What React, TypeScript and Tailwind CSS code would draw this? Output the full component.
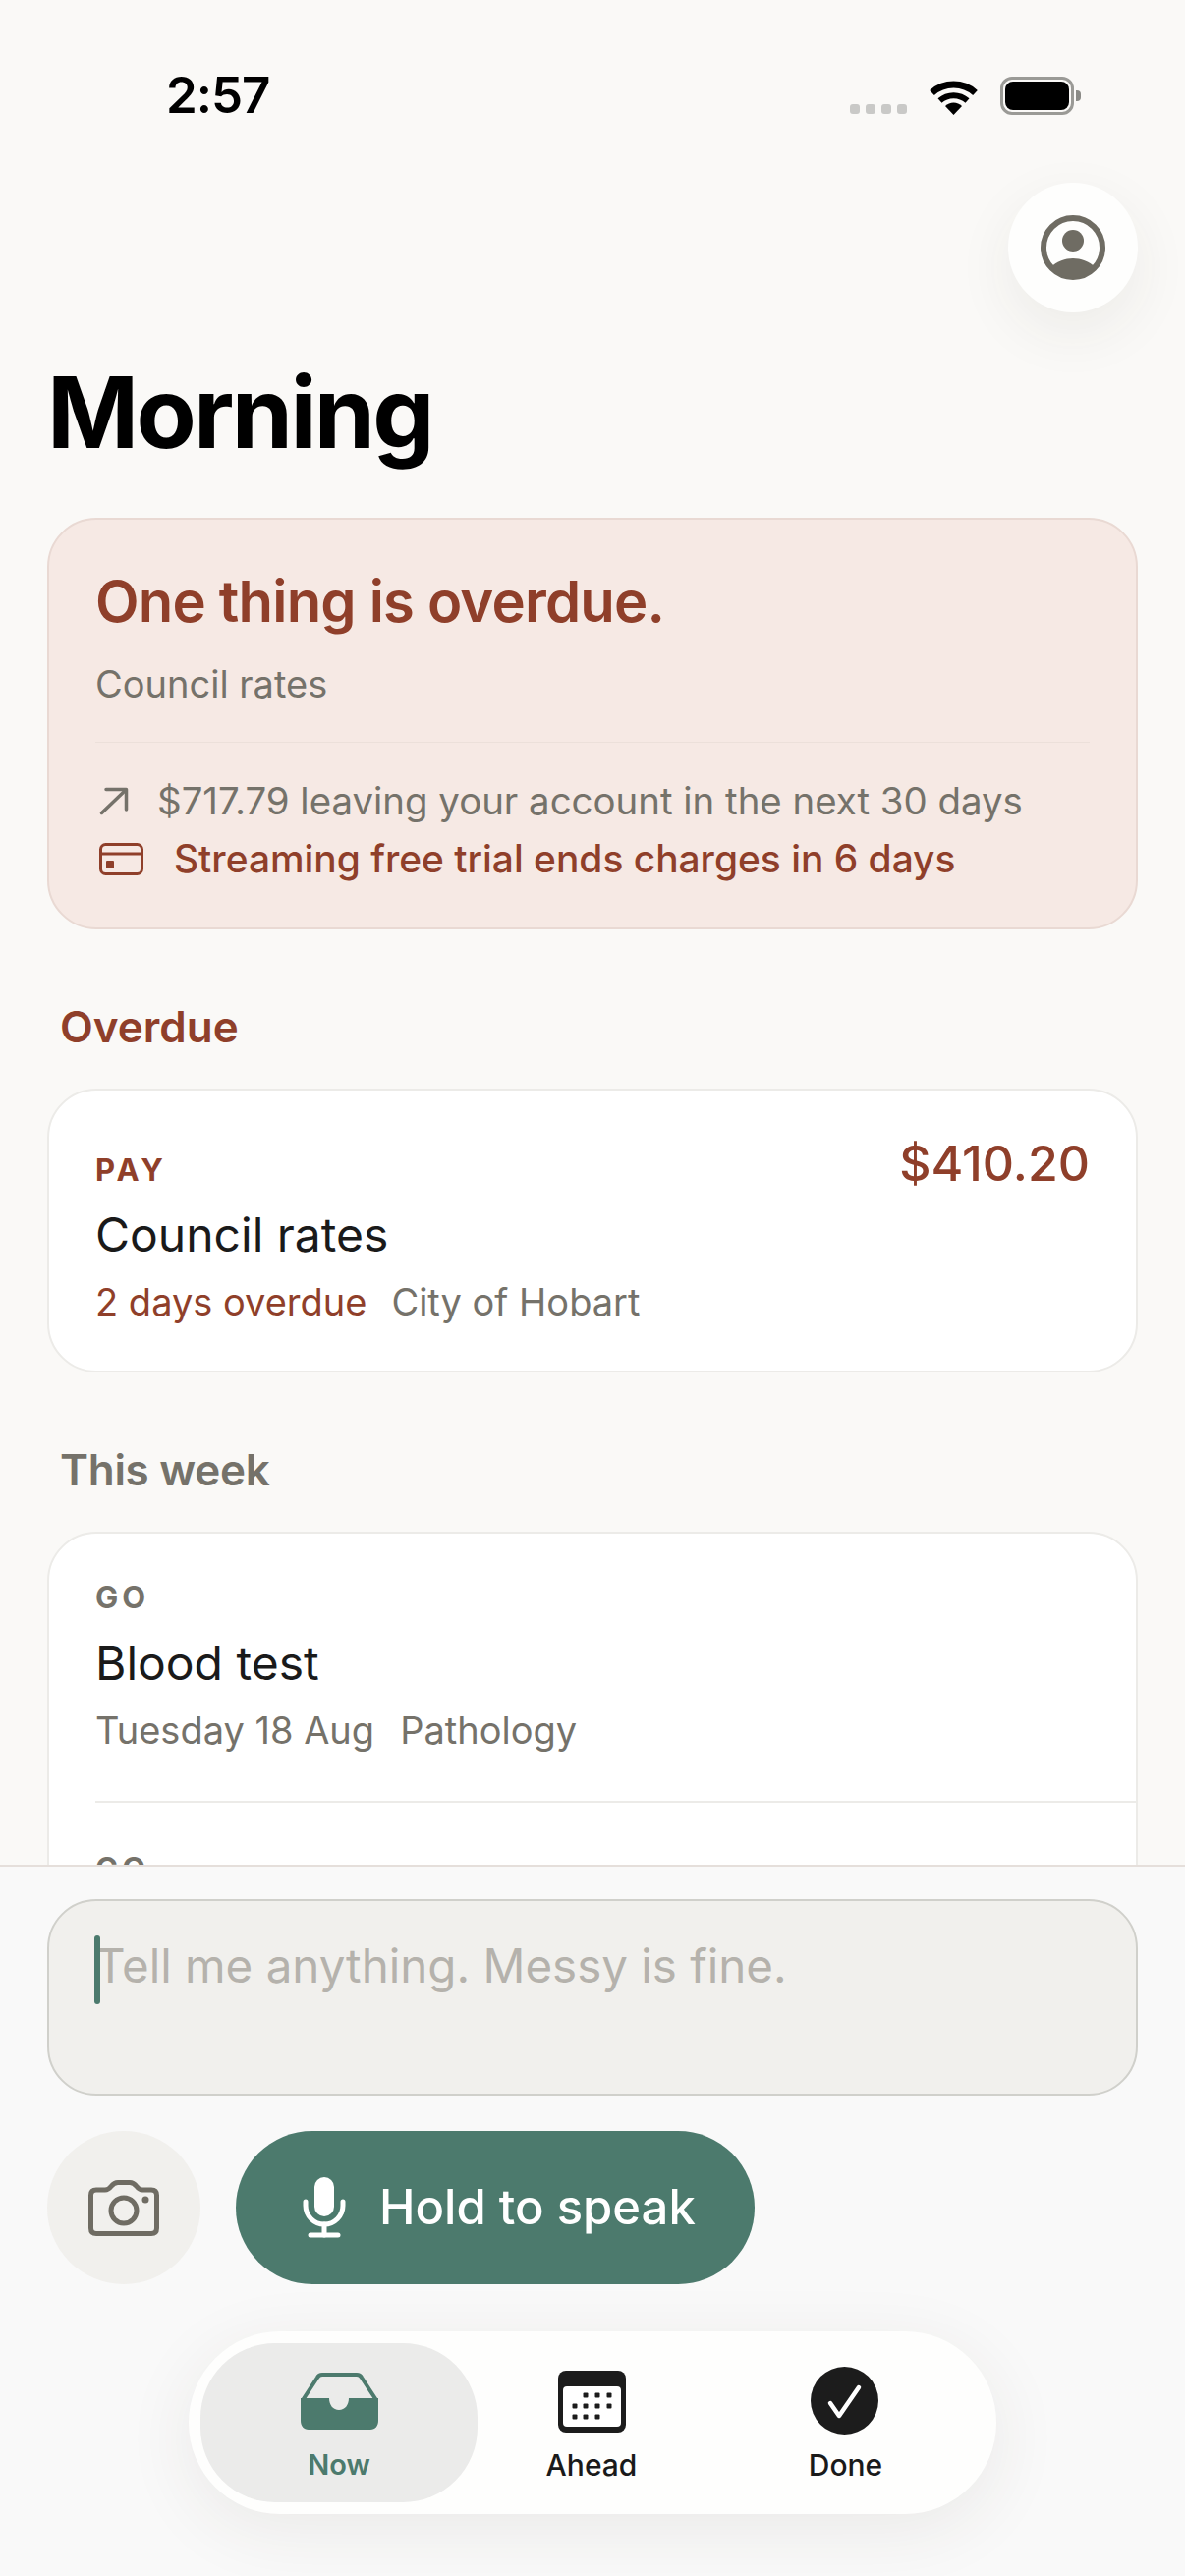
const Wifi = () => (
  <svg width="51" height="37" viewBox="0 0 51 37" fill="none">
    <path d="M3.5 14.5A33 33 0 0 1 47.5 14.5" stroke="#000" strokeWidth="7" />
    <path d="M11.5 22.5A21 21 0 0 1 39.5 22.5" stroke="#000" strokeWidth="6" />
    <path d="M25.5 37L17 28A12 12 0 0 1 34 28Z" fill="#000" />
  </svg>
)

const Avatar = () => (
  <svg width="66" height="66" viewBox="0 0 66 66" fill="none">
    <circle cx="33" cy="33" r="30" stroke="#6f6c63" strokeWidth="6" />
    <circle cx="33" cy="26" r="11" fill="#6f6c63" />
    <path d="M10 53C17 47 25 44 33 44C41 44 49 47 56 53A30 30 0 0 1 10 53Z" fill="#6f6c63" />
  </svg>
)

const ArrowUpRight = () => (
  <svg width="32" height="30" viewBox="0 0 32 30" fill="none" stroke="#75726a" strokeWidth="3.500" strokeLinecap="round" strokeLinejoin="round">
    <path d="M3.500 27.500L27.500 4.500" />
    <path d="M8 3.500H28.500V24" />
  </svg>
)

const CardIcon = () => (
  <svg width="45" height="33" viewBox="0 0 45 33" fill="none">
    <rect x="1.500" y="1.500" width="42" height="30" rx="5" stroke="#8f3f2a" strokeWidth="3" />
    <path d="M2 11H43" stroke="#8f3f2a" strokeWidth="3" />
    <rect x="7" y="18" width="8" height="8" rx="1" fill="#8f3f2a" />
  </svg>
)

const Camera = () => (
  <svg width="72" height="57" viewBox="0 0 72 57" fill="none" stroke="#6f6c63" strokeWidth="5">
    <path d="M8 10H17C20 10 21 9 23 6.500C25 4 27 2.500 30 2.500H42C45 2.500 47 4 49 6.500C51 9 52 10 55 10H64C67.500 10 69.500 12 69.500 15.500V49C69.500 52.500 67.500 54.500 64 54.500H8C4.500 54.500 2.500 52.500 2.500 49V15.500C2.500 12 4.500 10 8 10Z" />
    <circle cx="36" cy="31" r="13" />
    <circle cx="58" cy="20" r="3.500" fill="#6f6c63" stroke="none" />
  </svg>
)

const Mic = () => (
  <svg width="44" height="62" viewBox="0 0 44 62" fill="none" stroke="#fff" strokeWidth="5" strokeLinecap="round">
    <rect x="12" y="0" width="20" height="40" rx="10" fill="#fff" stroke="none" />
    <path d="M3 25V29A19 19 0 0 0 41 29V25" />
    <path d="M22 48V59" />
    <path d="M8 59H36" />
  </svg>
)

const InboxIcon = () => (
  <svg width="79" height="58" viewBox="0 0 79 58" fill="none">
    <path d="M2 28L17 5C18 3 19 2 22 2H57C60 2 61 3 62 5L77 28" stroke="#4c7a6d" strokeWidth="4" />
    <path d="M0 26H29C29 33 33 38 39 38C45 38 49 33 49 26H79V49C79 54 76 58 71 58H8C3 58 0 54 0 49Z" fill="#4c7a6d" />
  </svg>
)

const dots = [
  [28, 25], [40, 25], [52, 25],
  [17, 36], [28, 36], [40, 36], [52, 36],
  [17, 47], [28, 47], [40, 47],
]

const CalendarIcon = () => (
  <svg width="69" height="63" viewBox="0 0 69 63">
    <rect width="69" height="63" rx="8" fill="#1c1c1c" />
    <rect x="5" y="16" width="59" height="41" rx="4" fill="#fff" />
    {dots.map(([x, y]) => (
      <rect key={`${x}-${y}`} x={x - 2.5} y={y - 2.5} width="5" height="5" rx="1" fill="#1c1c1c" />
    ))}
  </svg>
)

const CheckIcon = () => (
  <svg width="69" height="69" viewBox="0 0 69 69" fill="none">
    <circle cx="34.500" cy="34.500" r="34.500" fill="#1c1c1c" />
    <path d="M20 37L29 50L49 21" stroke="#fff" strokeWidth="4.500" strokeLinecap="round" strokeLinejoin="round" />
  </svg>
)

export default function App() {
  return (
    <div className="relative h-[2622px] w-[1206px] overflow-hidden bg-[#faf9f7] [font-family:Inter,sans-serif]">
      {/* status bar */}
      <div className="flex h-[186px] items-start justify-between">
        <div className="mt-[66px] ml-[169px] text-[51px] leading-[62px] font-semibold tracking-[-1px] text-black">2:57</div>
        <div className="mt-[78px] mr-[106px] flex items-end">
          <div className="mb-[1px] flex gap-[6px]">
            <div className="h-[10px] w-[10px] rounded-[3px] bg-[#c9c9c7]" />
            <div className="h-[10px] w-[10px] rounded-[3px] bg-[#c9c9c7]" />
            <div className="h-[10px] w-[10px] rounded-[3px] bg-[#c9c9c7]" />
            <div className="h-[10px] w-[10px] rounded-[3px] bg-[#c9c9c7]" />
          </div>
          <div className="ml-[22px]"><Wifi /></div>
          <div className="ml-[22px] flex items-center">
            <div className="h-[39px] w-[75px] rounded-[12px] border-[3px] border-[#9a9a96] p-[2px]">
              <div className="h-full w-full rounded-[8px] bg-black" />
            </div>
            <div className="ml-[2px] h-[11px] w-[5px] rounded-r-[4px] bg-[#8a8a86]" />
          </div>
        </div>
      </div>

      {/* profile */}
      <div className="flex justify-end pr-[48px]">
        <div className="flex h-[132px] w-[132px] items-center justify-center rounded-full bg-[#fefefd] shadow-[0_20px_60px_rgba(60,50,40,0.07)]">
          <Avatar />
        </div>
      </div>

      <h1 className="mt-[52px] ml-[48px] text-[100px] leading-[100px] font-bold tracking-[-2.7px] text-black">Morning</h1>

      <div className="mx-[48px] mt-[57px]">
        {/* summary */}
        <div className="rounded-[50px] border-2 border-[#e9d9d3] bg-[#f6e9e4] px-[47px] pt-[48px] pb-[45px]">
          <div className="text-[58px] leading-[70px] font-semibold tracking-[-0.8px] text-[#8f3f2a]">One thing is overdue.</div>
          <div className="mt-[24px] text-[38px] leading-[50px] text-[#75726a]">Council rates</div>
          <div className="mt-[34px] h-px bg-[#ece0da]" />
          <div className="mt-[34px] flex items-center text-[38.4px] leading-[50px] text-[#75726a]">
            <div className="ml-[3px]"><ArrowUpRight /></div>
            <span className="ml-[28px]">$717.79 leaving your account in the next 30 days</span>
          </div>
          <div className="mt-[9px] flex items-center text-[38.9px] leading-[50px] font-medium text-[#8f3f2a]">
            <div className="ml-[4px]"><CardIcon /></div>
            <span className="ml-[31px]">Streaming free trial ends charges in 6 days</span>
          </div>
        </div>

        <div className="mt-[71px] ml-[13px] text-[44px] leading-[56px] font-semibold text-[#8f3f2a]">Overdue</div>
        <div className="mt-[35px] rounded-[50px] border-2 border-[#ecebe8] bg-white px-[47px] pt-[44px] pb-[45px]">
          <div className="flex items-baseline justify-between">
            <span className="text-[31px] leading-[38px] font-bold tracking-[4px] text-[#8f3f2a]">PAY</span>
            <span className="text-[50px] leading-[60px] font-medium text-[#8f3f2a]">$410.20</span>
          </div>
          <div className="mt-[13px] text-[48px] leading-[60px] text-[#1a1a1a]">Council rates</div>
          <div className="mt-[13px] flex text-[38px] leading-[50px]">
            <span className="text-[#8f3f2a]">2 days overdue</span>
            <span className="ml-[25px] text-[#75726a]">City of Hobart</span>
          </div>
        </div>

        <div className="mt-[71px] ml-[13px] text-[44px] leading-[56px] font-semibold tracking-[-0.3px] text-[#75726a]">This week</div>
        <div className="mt-[35px] rounded-[50px] border-2 border-[#ecebe8] bg-white pl-[47px]">
          <div className="pt-[46px] pb-[47px]">
            <div className="text-[31px] leading-[38px] font-bold tracking-[4px] text-[#75726a]">GO</div>
            <div className="mt-[18px] text-[48px] leading-[60px] text-[#1a1a1a]">Blood test</div>
            <div className="mt-[13px] flex text-[38px] leading-[50px] text-[#75726a]">
              <span>Tuesday 18 Aug</span>
              <span className="ml-[26px]">Pathology</span>
            </div>
          </div>
          <div className="border-t-2 border-[#ecebe8] pt-[48px] pb-[200px]">
            <div className="text-[31px] leading-[38px] font-bold tracking-[4px] text-[#75726a]">GO</div>
          </div>
        </div>
      </div>

      {/* composer sits over the list */}
      <div className="absolute inset-x-0 top-[1898px] bottom-0 border-t-2 border-[#e5dfdb] bg-[#f9f9f9] px-[48px] pt-[33px]">
        <div className="relative h-[200px] rounded-[50px] border-2 border-[#d0d0cb] bg-[#f1f0ed] pt-[36px] pl-[47px] text-[47.500px] leading-[60px] text-[#b5b2ac]">
          Tell me anything. Messy is fine.
          <div className="absolute top-[35px] left-[46px] h-[70px] w-[6px] rounded-full bg-[#4c7a6d]" />
        </div>

        <div className="mt-[36px] flex gap-[36px]">
          <div className="flex h-[156px] w-[156px] items-center justify-center rounded-full bg-[#f1f0ed]">
            <Camera />
          </div>
          <div className="flex h-[156px] w-[528px] items-center rounded-[78px] bg-[#4c7a6d] pl-[68px]">
            <Mic />
            <span className="ml-[34px] text-[49px] leading-[60px] font-medium text-white">Hold to speak</span>
          </div>
        </div>

        <div className="mx-auto mt-[48px] flex h-[186px] w-[822px] rounded-[93px] bg-[#fefefd] p-[12px] shadow-[0_16px_70px_rgba(60,50,40,0.08)]">
          <div className="z-0 flex h-[162px] w-[282px] flex-col items-center rounded-[76px] bg-[#ebebea]">
            <div className="mt-[30px] flex h-[58px] items-end"><InboxIcon /></div>
            <span className="mt-[18px] text-[29px] leading-[36px] font-semibold text-[#4c7a6d]">Now</span>
          </div>
          <div className="z-10 -ml-[25px] flex h-[162px] w-[282px] flex-col items-center">
            <div className="mt-[28px] flex h-[63px] items-end"><CalendarIcon /></div>
            <span className="mt-[15px] text-[30px] leading-[36px] font-medium text-[#1a1a1a]">Ahead</span>
          </div>
          <div className="z-10 -ml-[25px] flex h-[162px] w-[282px] flex-col items-center">
            <div className="mt-[24px] flex h-[69px] items-end"><CheckIcon /></div>
            <span className="mt-[13px] ml-[3px] text-[30px] leading-[36px] font-medium text-[#1a1a1a]">Done</span>
          </div>
        </div>
      </div>
    </div>
  )
}
